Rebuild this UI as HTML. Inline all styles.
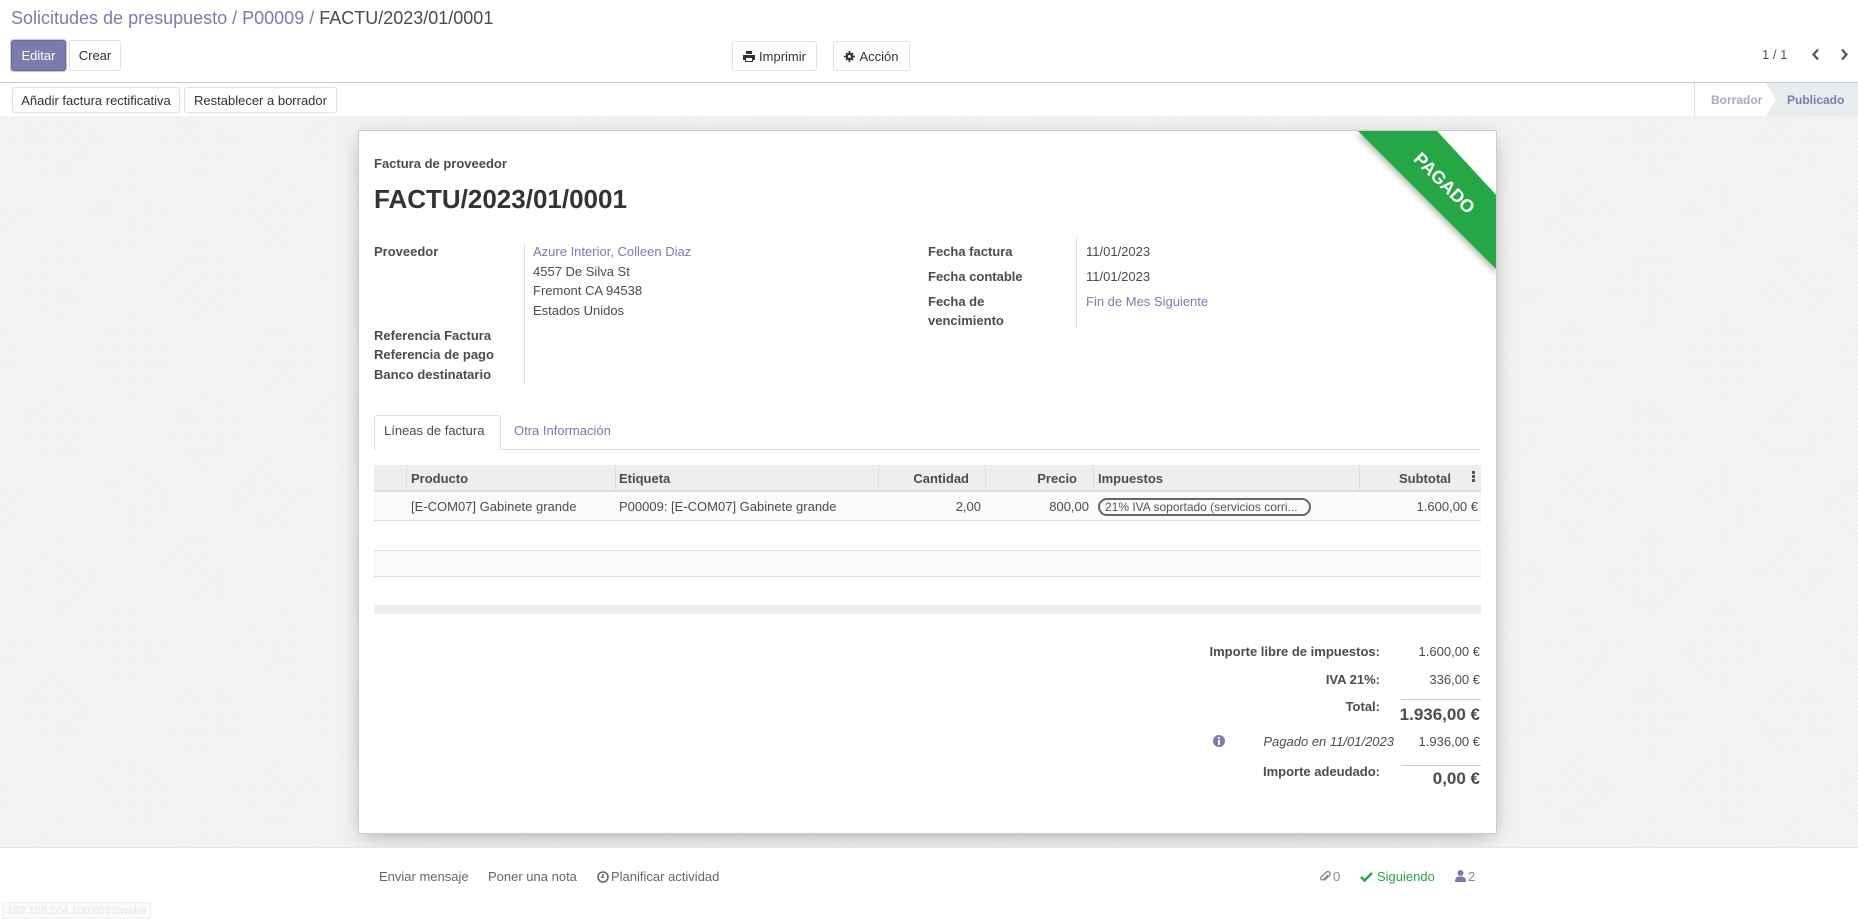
<!DOCTYPE html>
<html><head><meta charset="utf-8">
<style>
*{box-sizing:border-box;margin:0;padding:0}
body{width:1858px;height:919px;overflow:hidden;font-family:"Liberation Sans",Arial,sans-serif;font-size:13px;color:#4c4c4c;background:#fff;position:relative}
.a{position:absolute;white-space:nowrap}
.btn{position:absolute;border:1px solid #dee2e6;background:#fff;border-radius:3px;display:flex;align-items:center;justify-content:center;color:#333;font-size:13px}
.bg{position:absolute;left:0;top:116px;width:1858px;height:732px;background-color:#f5f5f5;background-image:repeating-linear-gradient(45deg,rgba(0,0,0,.018) 0 1px,transparent 1px 3px),repeating-linear-gradient(-45deg,rgba(0,0,0,.018) 0 1px,transparent 1px 3px)}
.card{position:absolute;left:358px;top:130px;width:1139px;height:704px;background:#fff;border:1px solid #ccc;box-shadow:0 5px 20px -5px rgba(0,0,0,.35);overflow:hidden}
.lbl{font-weight:bold;color:#4c4c4c}
.lnk{color:#7c7bad}
.r{text-align:right}
</style></head><body>
<div class="a" style="left:11px;top:8px;font-size:18px;color:#7c7bad">Solicitudes de presupuesto / P00009 / <span style="color:#4c4c4c">FACTU/2023/01/0001</span></div>
<div class="btn" style="left:11px;top:40px;width:55px;height:31px;background:#7c7bad;border-color:#6a699a;color:#fff;box-shadow:0 0 0 1px #c9c8e0">Editar</div>
<div class="btn" style="left:69px;top:40px;width:52px;height:31px">Crear</div>
<div class="btn" style="left:732px;top:41px;width:85px;height:30px"><svg width="12" height="11" viewBox="0 0 12 11" style="margin-right:4px"><path d="M3 0h6v3H3zM0 4h12v5h-2v2H2V9H0zM3 7v3h6V7z" fill="#333" fill-rule="evenodd"/></svg>Imprimir</div>
<div class="btn" style="left:833px;top:41px;width:77px;height:30px"><svg width="11" height="11" viewBox="0 0 12 12" style="margin-right:4px"><circle cx="6" cy="6" r="4" fill="#333"/><path d="M5 0h2v12H5zM0 5h12v2H0z" fill="#333"/><path d="M1.5 2.9l1.4-1.4 7.6 7.6-1.4 1.4zM9.1 1.5l1.4 1.4-7.6 7.6-1.4-1.4z" fill="#333"/><circle cx="6" cy="6" r="1.6" fill="#fff"/></svg>Acción</div>
<div class="a" style="left:1762px;top:47px;color:#555">1 / 1</div>
<svg class="a" style="left:1811px;top:48px" width="10" height="13" viewBox="0 0 10 13"><path d="M7 1.5L2.5 6.5 7 11.5" stroke="#555" stroke-width="2.2" fill="none"/></svg>
<svg class="a" style="left:1839px;top:48px" width="10" height="13" viewBox="0 0 10 13"><path d="M3 1.5l4.5 5L3 11.5" stroke="#555" stroke-width="2.2" fill="none"/></svg>
<div class="a" style="left:0;top:82px;width:1858px;height:1px;background:#ccc"></div>
<div class="btn" style="left:12px;top:87px;width:168px;height:26px">Añadir factura rectificativa</div>
<div class="btn" style="left:184px;top:87px;width:153px;height:26px">Restablecer a borrador</div>
<div class="a" style="left:1694px;top:83px;width:1px;height:33px;background:#ddd"></div>
<div class="a" style="left:1711px;top:93px;font-size:12px;font-weight:bold;color:#aab">Borrador</div>
<svg class="a" style="left:1766px;top:83px" width="92" height="33"><polygon points="0,0 92,0 92,33 0,33 10,16.5" fill="#e9ecef"/></svg>
<div class="a" style="left:1787px;top:93px;font-size:12px;font-weight:bold;color:#7c7bad">Publicado</div>
<div class="a" style="left:0;top:116px;width:1858px;height:1px;background:#ccc"></div>
<div class="bg"></div>
<div class="card">
 <svg class="a" style="left:0;top:0" width="1139" height="704"><defs><filter id="s"><feDropShadow dx="-2" dy="3" stdDeviation="3" flood-opacity=".25"/></filter></defs><polygon points="999,0 1078,0 1139,66 1139,140" fill="#28a745" filter="url(#s)"/></svg>
 <div class="a" style="left:1045px;top:42px;width:80px;text-align:center;color:#fff;font-weight:bold;font-size:18px;transform:rotate(45deg);transform-origin:50% 50%">PAGADO</div>
 <div class="a" style="left:15px;top:25px;font-weight:bold;font-size:13px">Factura de proveedor</div>
 <div class="a" style="left:15px;top:53px;font-weight:bold;font-size:26px;color:#333">FACTU/2023/01/0001</div>
 <div class="a lbl" style="left:15px;top:113px">Proveedor</div>
 <div class="a" style="left:165px;top:113px;width:1px;height:140px;background:#ddd"></div>
 <div class="a lnk" style="left:174px;top:113px">Azure Interior, Colleen Diaz</div>
 <div class="a" style="left:174px;top:133px">4557 De Silva St</div>
 <div class="a" style="left:174px;top:152px">Fremont CA 94538</div>
 <div class="a" style="left:174px;top:172px">Estados Unidos</div>
 <div class="a lbl" style="left:15px;top:197px">Referencia Factura</div>
 <div class="a lbl" style="left:15px;top:216px">Referencia de pago</div>
 <div class="a lbl" style="left:15px;top:236px">Banco destinatario</div>
 <div class="a lbl" style="left:569px;top:113px">Fecha factura</div>
 <div class="a lbl" style="left:569px;top:138px">Fecha contable</div>
 <div class="a lbl" style="left:569px;top:163px">Fecha de</div>
 <div class="a lbl" style="left:569px;top:182px">vencimiento</div>
 <div class="a" style="left:717px;top:106px;width:1px;height:90px;background:#ddd"></div>
 <div class="a" style="left:727px;top:113px">11/01/2023</div>
 <div class="a" style="left:727px;top:138px">11/01/2023</div>
 <div class="a lnk" style="left:727px;top:163px">Fin de Mes Siguiente</div>
 <div class="a" style="left:15px;top:318px;width:1107px;height:1px;background:#ddd"></div>
 <div class="a" style="left:15px;top:284px;width:127px;height:35px;border:1px solid #ddd;border-bottom-color:#fff;background:#fff;border-radius:3px 3px 0 0"></div>
 <div class="a" style="left:25px;top:292px;color:#4c4c4c">Líneas de factura</div>
 <div class="a lnk" style="left:155px;top:292px">Otra Información</div>
 <div class="a" style="left:15px;top:334px;width:1107px;height:27px;background:#eee;border-bottom:2px solid #ddd"></div>
 <div class="a" style="left:47px;top:334px;width:1px;height:26px;background:#ddd"></div>
 <div class="a" style="left:256px;top:334px;width:1px;height:26px;background:#ddd"></div>
 <div class="a" style="left:519px;top:334px;width:1px;height:26px;background:#ddd"></div>
 <div class="a" style="left:626px;top:334px;width:1px;height:26px;background:#ddd"></div>
 <div class="a" style="left:734px;top:334px;width:1px;height:26px;background:#ddd"></div>
 <div class="a" style="left:1000px;top:334px;width:1px;height:26px;background:#ddd"></div>
 <div class="a lbl" style="left:52px;top:340px">Producto</div>
 <div class="a lbl" style="left:256px;top:340px;padding-left:4px">Etiqueta</div>
 <div class="a lbl r" style="left:520px;top:340px;width:90px">Cantidad</div>
 <div class="a lbl r" style="left:630px;top:340px;width:88px">Precio</div>
 <div class="a lbl" style="left:739px;top:340px">Impuestos</div>
 <div class="a lbl r" style="left:1000px;top:340px;width:92px">Subtotal</div>
 <div class="a" style="left:1113px;top:340px;width:3px;height:11px;background:repeating-linear-gradient(#555 0 3px,transparent 3px 4px)"></div>
 <div class="a" style="left:15px;top:361px;width:1107px;height:29px;background:#fafafa;border-bottom:1px solid #ddd"></div>
 <div class="a" style="left:52px;top:368px">[E-COM07] Gabinete grande</div>
 <div class="a" style="left:260px;top:368px">P00009: [E-COM07] Gabinete grande</div>
 <div class="a r" style="left:520px;top:368px;width:102px">2,00</div>
 <div class="a r" style="left:630px;top:368px;width:100px">800,00</div>
 <div class="a" style="left:739px;top:367px;width:213px;height:18px;border:2px solid #666;border-radius:9px;font-size:12px;line-height:14px;padding-left:5px;color:#555">21% IVA soportado (servicios corri...</div>
 <div class="a r" style="left:1000px;top:368px;width:119px">1.600,00 €</div>
 <div class="a" style="left:15px;top:419px;width:1107px;height:1px;background:#ddd"></div>
 <div class="a" style="left:15px;top:420px;width:1107px;height:26px;background:#fafafa;border-bottom:1px solid #ddd"></div>
 <div class="a" style="left:15px;top:474px;width:1107px;height:9px;background:#eee"></div>
 <div class="a lbl r" style="left:600px;top:513px;width:421px">Importe libre de impuestos:</div>
 <div class="a r" style="left:1000px;top:513px;width:121px">1.600,00 €</div>
 <div class="a lbl r" style="left:600px;top:541px;width:421px">IVA 21%:</div>
 <div class="a r" style="left:1000px;top:541px;width:121px">336,00 €</div>
 <div class="a" style="left:1042px;top:568px;width:80px;height:1px;background:#ccc"></div>
 <div class="a lbl r" style="left:600px;top:568px;width:421px">Total:</div>
 <div class="a r" style="left:950px;top:574px;width:171px;font-weight:bold;font-size:17px">1.936,00 €</div>
 <svg class="a" style="left:854px;top:604px" width="12" height="12"><circle cx="6" cy="6" r="6" fill="#7c7bad"/><rect x="5" y="5" width="2" height="5" fill="#fff"/><circle cx="6" cy="3" r="1.1" fill="#fff"/></svg>
 <div class="a r" style="left:700px;top:603px;width:335px;font-style:italic">Pagado en 11/01/2023</div>
 <div class="a r" style="left:1000px;top:603px;width:121px">1.936,00 €</div>
 <div class="a" style="left:1042px;top:634px;width:80px;height:1px;background:#ccc"></div>
 <div class="a lbl r" style="left:600px;top:633px;width:421px">Importe adeudado:</div>
 <div class="a r" style="left:950px;top:638px;width:171px;font-weight:bold;font-size:17px">0,00 €</div>
</div>
<div class="a" style="left:0;top:847px;width:1858px;height:72px;background:#fff;border-top:1px solid #e6e6e6"></div>
<div class="a" style="left:379px;top:869px;color:#666">Enviar mensaje</div>
<div class="a" style="left:488px;top:869px;color:#666">Poner una nota</div>
<svg class="a" style="left:597px;top:871px" width="12" height="12"><circle cx="6" cy="6" r="5" stroke="#666" stroke-width="1.6" fill="none"/><path d="M6 3v3.3H3.8" stroke="#666" stroke-width="1.4" fill="none"/></svg>
<div class="a" style="left:611px;top:869px;color:#666">Planificar actividad</div>
<svg class="a" style="left:1319px;top:870px" width="12" height="13" viewBox="0 0 12 13"><path d="M9 5L4.5 9.5a1.6 1.6 0 01-2.3-2.3L7.5 2a2.3 2.3 0 013.2 3.2L5.5 10.4" stroke="#888" stroke-width="1.3" fill="none"/></svg>
<div class="a" style="left:1333px;top:869px;color:#888">0</div>
<svg class="a" style="left:1360px;top:872px" width="13" height="10"><path d="M1 5l3.5 3.5L12 1" stroke="#28a745" stroke-width="2.6" fill="none"/></svg>
<div class="a" style="left:1377px;top:869px;color:#28a745">Siguiendo</div>
<svg class="a" style="left:1455px;top:870px" width="11" height="12"><circle cx="5.5" cy="3" r="3" fill="#7c7bad"/><path d="M0 12c0-4 1.5-5.5 5.5-5.5S11 8 11 12z" fill="#7c7bad"/></svg>
<div class="a" style="left:1468px;top:869px;color:#888">2</div>
<div class="a" style="left:2px;top:902px;height:17px;border:1px solid #f0f0f0;background:#fafafa;color:#e6e6e6;font-size:11px;padding:2px 4px">192.168.204.100:8069/web#</div>
</body></html>
